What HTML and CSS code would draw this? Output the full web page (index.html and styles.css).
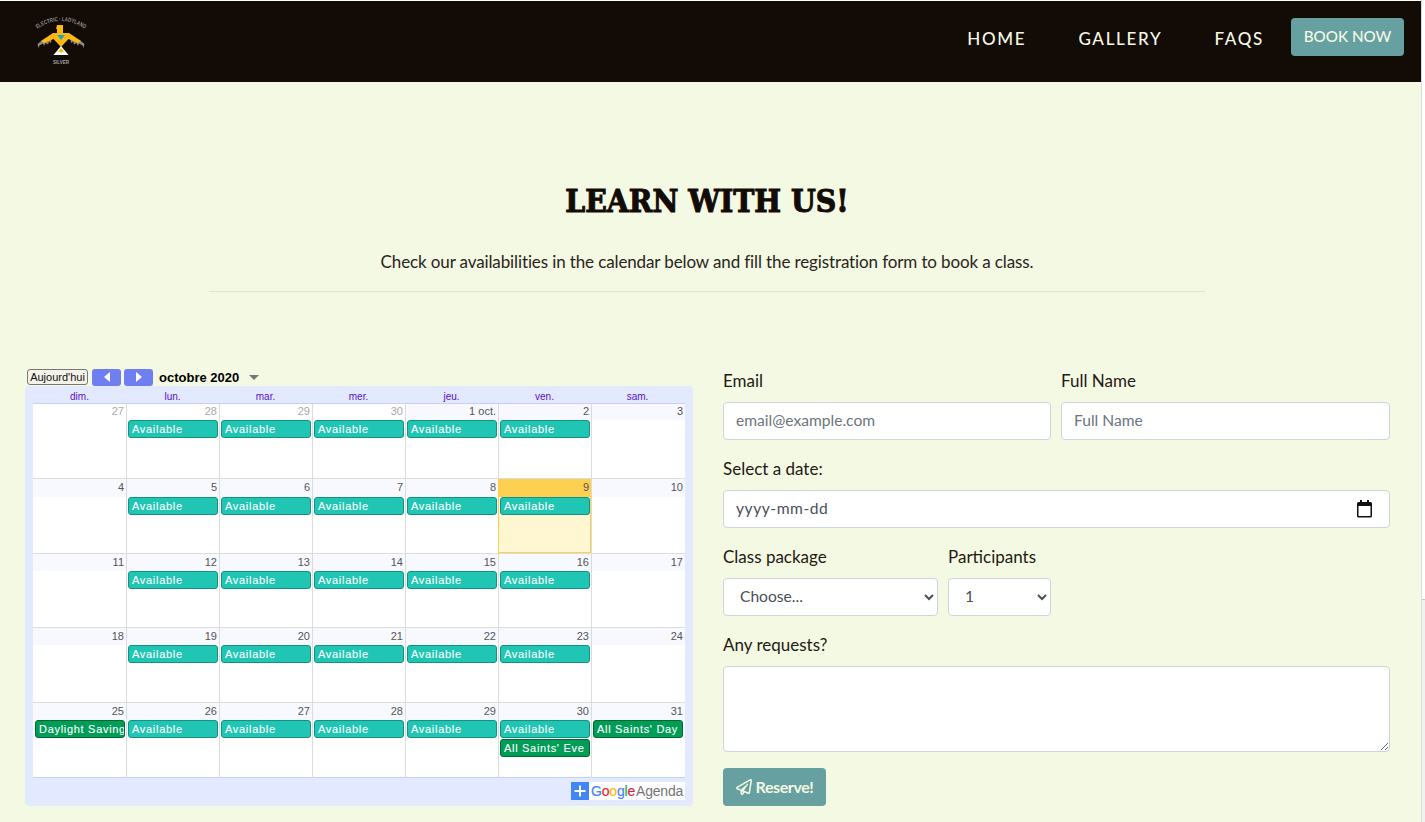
FILE: index.html
```html
<!DOCTYPE html>
<html lang="en">
<head>
<meta charset="utf-8">
<title>Learn with us</title>
<link rel="stylesheet" href="styles.css">
</head>
<body>
<div class="page">
  <header class="topbar">
    <svg class="logo" viewBox="0 0 60 60" aria-label="Logo">
      <defs><path id="arc" d="M4 21 Q31 1 58 21"/></defs>
      <text class="logo-arc"><textPath href="#arc" startOffset="50%" text-anchor="middle" textLength="51" lengthAdjust="spacingAndGlyphs">ELECTRIC · LADYLAND</textPath></text>
      <path class="bird-grey" d="M12.500 30 L7.500 34 L8.500 38 L9.500 35.500 L13 33.500 L14 36 L15.500 33 L18 34.500 L19 31.500 L21 33 L22 27 Z M49.500 30 L54.500 34 L53.500 38 L52.500 35.500 L49 33.500 L48 36 L46.500 33 L44 34.500 L43 31.500 L41 33 L40 27 Z"/>
      <path class="bird-gold" d="M27 15 H33 V23 H39 L51 31 L48 33 L38.500 29 L31 37 L23.500 29 L14 33 L11 31 L23 23 H27 V19 H26 Z"/>
      <path class="bird-teal" d="M27 25 H35 L31 30 Z"/>
      <path class="bird-white" d="M31 36 L38.500 45 H23.500 Z"/>
      <path class="bird-gold" d="M31 38 L34.500 42.500 L33 41.500 L31 43 L29 41.500 L27.500 42.500 Z"/>
      <text class="logo-foot" x="31" y="54" text-anchor="middle" textLength="16" lengthAdjust="spacingAndGlyphs">SILVER</text>
    </svg>
    <nav class="menu">
      <a class="menu-link" href="#">HOME</a>
      <a class="menu-link" href="#">GALLERY</a>
      <a class="menu-link" href="#">FAQS</a>
      <a class="book-btn" href="#">BOOK NOW</a>
    </nav>
  </header>

  <section class="intro">
    <h1 class="intro-title">LEARN WITH US!</h1>
    <p class="intro-text">Check our availabilities in the calendar below and fill the registration form to book a class.</p>
    <hr class="intro-rule">
  </section>

  <div class="booking">
    <div class="calendar">
      <div class="cal-toolbar">
        <button class="cal-today" type="button">Aujourd'hui</button>
        <button class="cal-nav" type="button"><span class="arrow-left"></span></button>
        <button class="cal-nav" type="button"><span class="arrow-right"></span></button>
        <span class="cal-month">octobre 2020</span>
        <span class="cal-caret"></span>
      </div>
      <div class="cal-frame">
        <div class="cal-days">
          <span>dim.</span><span>lun.</span><span>mar.</span><span>mer.</span><span>jeu.</span><span>ven.</span><span>sam.</span>
        </div>
        <div class="cal-grid">
          <div class="cell"><div class="num muted">27</div></div>
          <div class="cell"><div class="num muted">28</div><div class="ev">Available</div></div>
          <div class="cell"><div class="num muted">29</div><div class="ev">Available</div></div>
          <div class="cell"><div class="num muted">30</div><div class="ev">Available</div></div>
          <div class="cell"><div class="num">1 oct.</div><div class="ev">Available</div></div>
          <div class="cell"><div class="num">2</div><div class="ev">Available</div></div>
          <div class="cell"><div class="num">3</div></div>

          <div class="cell row2"><div class="num">4</div></div>
          <div class="cell row2"><div class="num">5</div><div class="ev">Available</div></div>
          <div class="cell row2"><div class="num">6</div><div class="ev">Available</div></div>
          <div class="cell row2"><div class="num">7</div><div class="ev">Available</div></div>
          <div class="cell row2"><div class="num">8</div><div class="ev">Available</div></div>
          <div class="cell row2 today"><div class="num">9</div><div class="ev">Available</div></div>
          <div class="cell row2"><div class="num">10</div></div>

          <div class="cell row"><div class="num">11</div></div>
          <div class="cell row"><div class="num">12</div><div class="ev">Available</div></div>
          <div class="cell row"><div class="num">13</div><div class="ev">Available</div></div>
          <div class="cell row"><div class="num">14</div><div class="ev">Available</div></div>
          <div class="cell row"><div class="num">15</div><div class="ev">Available</div></div>
          <div class="cell row"><div class="num">16</div><div class="ev">Available</div></div>
          <div class="cell row"><div class="num">17</div></div>

          <div class="cell row"><div class="num">18</div></div>
          <div class="cell row"><div class="num">19</div><div class="ev">Available</div></div>
          <div class="cell row"><div class="num">20</div><div class="ev">Available</div></div>
          <div class="cell row"><div class="num">21</div><div class="ev">Available</div></div>
          <div class="cell row"><div class="num">22</div><div class="ev">Available</div></div>
          <div class="cell row"><div class="num">23</div><div class="ev">Available</div></div>
          <div class="cell row"><div class="num">24</div></div>

          <div class="cell row"><div class="num">25</div><div class="ev ev-green">Daylight Savings</div></div>
          <div class="cell row"><div class="num">26</div><div class="ev">Available</div></div>
          <div class="cell row"><div class="num">27</div><div class="ev">Available</div></div>
          <div class="cell row"><div class="num">28</div><div class="ev">Available</div></div>
          <div class="cell row"><div class="num">29</div><div class="ev">Available</div></div>
          <div class="cell row"><div class="num">30</div><div class="ev">Available</div><div class="ev ev-green">All Saints' Eve</div></div>
          <div class="cell row"><div class="num">31</div><div class="ev ev-green">All Saints' Day</div></div>
        </div>
        <div class="cal-foot">
          <div class="gcal">
            <span class="gcal-plus"><svg viewBox="0 0 18 18" class="gcal-icon"><path d="M8 3.500 H10 V8 H14.500 V10 H10 V14.500 H8 V10 H3.500 V8 H8 Z"/></svg></span>
            <span class="gcal-word"><span class="g-b">G</span><span class="g-r">o</span><span class="g-y">o</span><span class="g-b">g</span><span class="g-g">l</span><span class="g-r">e</span></span>
            <span class="gcal-agenda">Agenda</span>
          </div>
        </div>
      </div>
    </div>

    <form class="form">
      <div class="form-row">
        <div class="field"><label class="label" for="email">Email</label><input class="control" id="email" type="email" placeholder="email@example.com"></div>
        <div class="field"><label class="label" for="name">Full Name</label><input class="control" id="name" type="text" placeholder="Full Name"></div>
      </div>
      <div class="field"><label class="label" for="date">Select a date:</label>
        <div class="date-wrap">
          <input class="control date-input" id="date" type="text" placeholder="yyyy-mm-dd">
          <svg class="date-icon" viewBox="0 0 15 18"><path d="M3 0 H5 V2 H10 V0 H12 V2 H13.500 A1.500 1.500 0 0 1 15 3.500 V16 A1.500 1.500 0 0 1 13.500 17.500 H1.500 A1.500 1.500 0 0 1 0 16 V3.500 A1.500 1.500 0 0 1 1.500 2 H3 Z M1.500 6 V15.500 A.5 .5 0 0 0 2 16 H13 A.5 .5 0 0 0 13.500 15.500 V6 Z"/></svg>
        </div>
      </div>
      <div class="form-row form-row-select">
        <div class="field"><label class="label" for="pack">Class package</label><select class="control select" id="pack"><option>Choose...</option></select></div>
        <div class="field"><label class="label" for="part">Participants</label><select class="control select" id="part"><option>1</option></select></div>
      </div>
      <div class="field"><label class="label" for="req">Any requests?</label><textarea class="control area" id="req"></textarea></div>
      <button class="reserve" type="button">
        <svg class="reserve-icon" viewBox="0 0 512 512"><path d="M440 6.500L24 246.400c-34.400 19.900-31.100 70.800 5.700 85.900L144 379.600V464c0 46.400 59.200 65.500 86.600 28.600l43.800-59.100 111.900 46.200c5.900 2.400 12.100 3.600 18.300 3.600 8.200 0 16.300-2.100 23.600-6.200 12.800-7.200 21.600-20 23.900-34.500l59.400-387.200c6.100-40.100-36.900-68.800-71.500-48.900zM192 464v-64.600l36.600 15.100L192 464zm212.600-28.700l-153.800-63.500L391 169.500c10.700-15.500-9.500-33.500-23.700-21.200L155.800 332.600 48 288 464 48l-59.400 387.300z"/></svg>
        <span>Reserve!</span>
      </button>
    </form>
  </div>
</div>
<div class="scrollbar"><div class="scroll-thumb"></div></div>
</body>
</html>
```
FILE: styles.css
```css
* { box-sizing: border-box; }
html, body { margin: 0; height: 822px; overflow: hidden; }
body {
  display: flex;
  background: #f4f9e3;
  font-family: "Lato", "Open Sans", sans-serif;
  color: #130b06;
}
.page { flex: 1; min-width: 0; padding-top: 1px; background: linear-gradient(#fff 1px, #f4f9e3 1px); }
.scrollbar { width: 4px; background: #f1f1f1; border-left: 1px solid #dcdcdc; }
.scroll-thumb { height: 600px; background: #fff; border-bottom: 1px solid #c8c8c8; }

.topbar {
  height: 81px;
  background: #130b06;
  display: flex;
  justify-content: space-between;
  padding: 9px 17px 0 30px;
}
.logo { width: 60px; height: 60px; }
.logo-arc { font: 700 6px "Liberation Sans", sans-serif; fill: #8d8d8d; }
.logo-foot { font: 700 6px "Liberation Sans", sans-serif; fill: #a5a5a5; }
.bird-grey { fill: #8a8a80; }
.bird-gold { fill: #fdb813; }
.bird-teal { fill: #1fa7b0; }
.bird-white { fill: #fff; }
.menu { display: flex; align-items: flex-start; }
.menu-link {
  color: #f4f9e3;
  text-decoration: none;
  font-size: 17px;
  font-weight: 500;
  letter-spacing: 1.7px;
  line-height: 24px;
  margin-top: 17px;
  margin-right: 52px;
}
.menu-link:nth-child(3) { margin-right: 27px; }
.book-btn {
  margin-top: 8px;
  width: 113px;
  height: 38px;
  border-radius: 4px;
  background: #66a0a0;
  color: #f4f9e3;
  text-decoration: none;
  font-size: 15.200px;
  font-weight: 500;
  line-height: 36px;
  text-align: center;
}

.intro { margin: 0 216px 0 209px; padding-top: 99px; text-align: center; }
.intro-title {
  margin: 0;
  font-family: "DejaVu Serif Condensed", "DejaVu Serif", serif;
  font-weight: 700;
  font-size: 31.500px;
  line-height: 40px;
  -webkit-text-stroke: 1px #130b06;
}
.intro-text { margin: 29px 0 0; font-size: 17px; letter-spacing: -.12px; line-height: 24px; font-weight: 400; color: #2a2420; }
.intro-rule { margin: 17px 0 0; border: 0; border-top: 1px solid #dfe3cf; }

.booking { display: flex; margin-top: 76px; padding: 0 35px 0 25px; align-items: flex-start; gap: 30px; }

.calendar { width: 668px; flex: none; font-family: "Liberation Sans", Arial, sans-serif; }
.cal-toolbar { display: flex; align-items: center; height: 18px; padding-left: 2px; }
.cal-today {
  width: 61px; height: 16px; padding: 0;
  border: 1px solid #777; border-radius: 3px;
  background: #f5f2ea; color: #111;
  font: 11px/14px "Liberation Sans", Arial, sans-serif;
  margin-right: 4px;
}
.cal-nav {
  width: 29px; height: 17px; padding: 0; border: 0; border-radius: 3px;
  background: #6f7ef0; margin-right: 3px;
  display: flex; align-items: center; justify-content: center;
}
.arrow-left, .arrow-right { width: 0; height: 0; border-top: 5px solid transparent; border-bottom: 5px solid transparent; }
.arrow-left { border-right: 6px solid #fff; }
.arrow-right { border-left: 6px solid #fff; }
.cal-month { font-size: 13px; font-weight: 700; color: #000; margin-left: 3px; }
.cal-caret { margin-left: 10px; margin-top: 1px; width: 0; height: 0; border-left: 5.500px solid transparent; border-right: 5.500px solid transparent; border-top: 5px solid #777; }

.cal-frame { background: #e3e9ff; border-radius: 4px; padding: 5px 8px 6px; height: 420px; }
.cal-days { display: grid; grid-template-columns: repeat(7, 93px); font-size: 10px; line-height: 12px; color: #5a10cc; text-align: center; }
.cal-grid {
  display: grid;
  grid-template-columns: 94px 93px 93px 93px 93px 93px 93px;
  grid-template-rows: 75px 75px 74px 75px 75px;
  width: 652px;
  background: #fff;
  border-top: 1px solid #c3d0f8;
  border-bottom: 1px solid #c3d0f8;
  height: 375px;
}
.cell { border-right: 1px solid #dcdcdc; border-bottom: 1px solid #dcdcdc; overflow: hidden; }
.cell:nth-child(7n) { border-right: 0; }
.cell:nth-last-child(-n+7) { border-bottom: 0; }
.num {
  height: 16px;
  background: #f8f9ff;
  font-size: 11px;
  line-height: 14px;
  text-align: right;
  padding-right: 2px;
  color: #555;
}
.row .num { height: 17px; line-height: 16px; }
.row2 .num { height: 18px; line-height: 16px; }
.muted { color: #aaa; background: #fff; }
.cell:first-child .num { background: #fff; }
.ev {
  width: 90px;
  height: 18px;
  margin: 0 0 1px 1px;
  padding-left: 3px;
  border: 1px solid #14917f;
  border-radius: 3px;
  background: #20c6b3;
  color: #fff;
  font-size: 11px;
  line-height: 16px;
  letter-spacing: .7px;
  -webkit-text-stroke: .1px #fff;
  white-space: nowrap;
  overflow: hidden;
}
.cell:nth-child(7n+1) .ev { margin-left: 2px; }
.ev-green { background: #009c58; border-color: #006b2a; }
.cell.today { background: #fff7d1; box-shadow: -1px 0 0 #fdd052, inset -1px -1px 0 #fdd052; }
.today .num { background: #fdd052; }
.cal-foot { display: flex; justify-content: flex-end; padding-top: 4px; }
.gcal { width: 114px; height: 18px; background: #fff; display: flex; align-items: center; font-size: 14px; letter-spacing: -.2px; }
.gcal-plus { width: 18px; height: 18px; background: #4285f4; flex: none; }
.gcal-icon { width: 18px; height: 18px; display: block; fill: #fff; }
.gcal-word { margin-left: 2px; -webkit-text-stroke: .2px currentColor; }
.gcal-agenda { margin-left: 1px; color: #757575; }
.g-b { color: #4285f4; }
.g-r { color: #ea1c3c; }
.g-y { color: #fbbc05; }
.g-g { color: #34a853; }

.form { width: 667px; flex: none; display: flex; flex-direction: column; padding-top: 2px; gap: 18px; }
.form-row { display: grid; grid-template-columns: 328px 329px; gap: 10px; }
.form-row-select { grid-template-columns: 215px 103px; }
.field { display: flex; flex-direction: column; }
.label { font-size: 17px; line-height: 22px; margin-bottom: 10px; color: #1f1a14; }
.control {
  width: 100%;
  height: 38px;
  padding: 5px 12px 7px;
  border: 1px solid #ced4da;
  border-radius: 4px;
  background: #fff;
  font: 400 15.600px/24px "Lato", "Open Sans", sans-serif;
  color: #495057;
}
.control::placeholder { color: #6c757d; opacity: 1; }
.date-wrap { position: relative; }
.date-input { letter-spacing: .55px; }
.date-input::placeholder { color: #495057; }
.date-icon { position: absolute; top: 10px; right: 18px; width: 15px; height: 18px; fill: #111; }
.area { height: 86px; resize: vertical; display: block; }
.reserve {
  align-self: flex-start;
  margin-top: -2px;
  width: 103px;
  height: 38px;
  border: 0;
  border-radius: 4px;
  background: #66a0a0;
  color: #f4f9e3;
  font: 700 16px/24px "Lato", "Open Sans", sans-serif;
  letter-spacing: -.4px;
  display: flex;
  align-items: center;
  justify-content: center;
  gap: 4px;
  padding: 0;
}
.reserve-icon { width: 16px; height: 16px; fill: #f4f9e3; }
```
